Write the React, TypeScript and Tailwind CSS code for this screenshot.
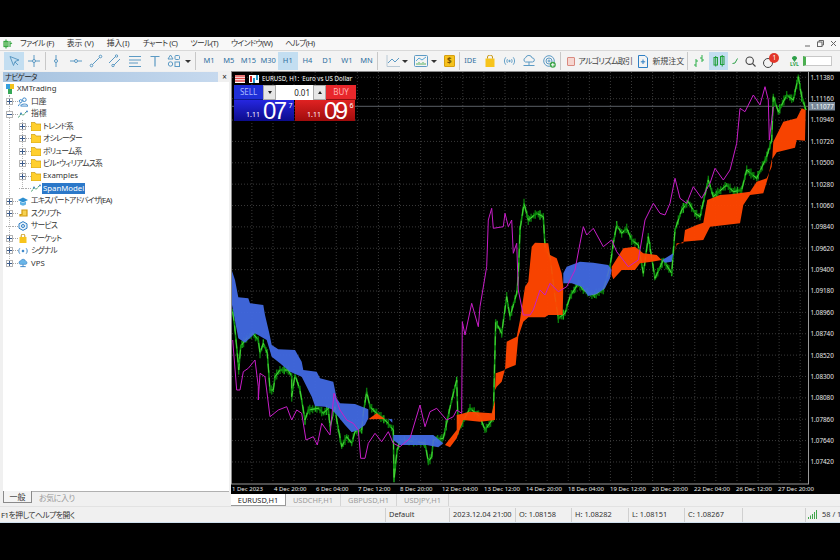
import React from "react";

type P = [number, number];
const zz = (ox: number, oy: number) => (a: number[]): P[] => { const o: P[] = []; for (let i = 0; i < a.length; i += 2) o.push([ox + a[i] / 3, oy + a[i + 1] / 3]); return o; };
const z8 = zz(230, 200);
const z9 = zz(500, 70);
const z10 = zz(485, 230);
const pts = (p: P[]) => p.map((q) => `${q[0].toFixed(1)},${q[1].toFixed(1)}`).join(" ");

const blue = [
  z8([5,210,15,240,25,292,55,295,60,310,100,315,105,345,118,400,125,435,145,448,195,450,215,485,220,510,260,515,270,535,310,545,320,595,330,610,375,612,415,628,415,655,405,675,385,690,365,697,345,675,325,650,305,628,285,620,255,618,245,590,215,530,180,515,150,490,125,470,110,420,75,400,45,428,25,415,5,310]),
  z8([475,656,487,658,487,668]),
  z8([490,705,610,705,640,730,625,742,590,735,510,735,490,720]),
  z9([190,610,200,590,240,575,280,578,325,585,335,600,330,625,315,655,290,672,265,678,245,650,215,640,190,640]),
  z9([487,570,520,550,515,575,495,578]),
];
const orange = [
  z8([415,658,440,640,465,657]),
  z8([645,735,680,690,680,645,720,635,785,640,795,600,795,660,750,665,700,660,680,715,660,742]),
  z10([30,480,32,430,60,420,65,335,95,320,105,270,120,170,130,155,140,50,150,38,190,40,195,75,215,85,230,130,235,170,233,255,190,255,180,262,130,262,115,275,100,320,92,405,60,418,50,455,35,470]),
  z9([335,590,370,535,405,530,430,550,470,555,485,570,455,575,420,580,405,600,365,600,340,628,335,615]),
  z9([522,550,530,520,550,520,555,480,590,465,610,458,622,390,660,375,700,372,750,365,770,335,800,325,815,290,820,215,850,155,890,145,905,115,917,120,915,212,890,210,885,233,830,247,815,270,805,320,790,370,750,375,730,405,720,460,630,470,610,510,550,515,530,525]),
];
const green: P[] = [
  ...z8([8,335,14,380,22,460,26,510,32,440,45,420,68,400,85,420,90,460,100,430,112,460,120,570,130,570,135,530,150,510,175,510,185,530,185,590,195,525,210,570,225,660,235,630,265,625,280,640,295,625,300,680,315,620,320,660,335,740,350,710,365,730,375,695,395,690,400,640,410,575,420,620,440,640,470,665,490,690,492,840,500,760,510,720,560,725,585,730,595,785,605,770,610,720,640,715,665,600,680,540,685,690,720,625,750,650,765,690,790,655,797,365,815,400,830,290,840,350,860,280,865,230]),
  ...z9([60,480,72,400,85,450,110,430,130,440,135,530,150,560,165,680,175,745,195,730,210,680,235,640,250,660,280,675,310,660,330,590,340,520,350,465,365,490,380,475,395,510,415,525,430,610,445,500,465,625,490,570,515,610,525,480,545,420,565,395,585,430,600,440,625,330,640,380,680,345,700,365,725,360,740,300,770,325,800,260,815,210,820,80,835,125,860,75,880,90,895,20,905,80,918,120]),
];
const magenta: P[] = [
  ...z8([8,420,20,570,30,570,40,515,55,505,75,480,85,560,85,600,90,520,105,530,120,650,145,630,170,620,185,660,200,630,215,640,228,720,250,710,262,735,275,670,300,705,312,580,330,630,350,660,370,670,385,690,392,775,405,775,415,730,435,700,455,725,475,695,490,730,510,740,540,715,570,615,585,680,600,635,620,625,650,660,670,650,680,630,695,640,697,365,705,405,725,310,745,380,750,320,770,200,775,60,785,25,790,85,820,80,825,40,835,80,845,60,850,160,860,130,865,270,880,345,900,345]),
  ...z9([100,720,120,660,135,675,150,640,175,665,200,650,225,600,240,520,250,470,260,495,280,475,310,530,335,510,350,545,385,590,415,570,425,510,435,450,460,400,480,430,495,435,510,400,525,325,540,385,560,400,580,350,605,385,630,340,645,295,670,330,690,300,710,220,720,115,735,125,760,75,780,105,795,50,805,90,808,210,820,110]),
];

function candles(line: P[]) {
  const out: { x: number; a: number; b: number; hi: boolean }[] = [];
  let k = 0;
  for (let i = 0; i < line.length - 1; i++) {
    const [x0, y0] = line[i];
    const [x1, y1] = line[i + 1];
    const n = Math.max(1, Math.round(Math.abs(x1 - x0) / 1.5));
    for (let j = 0; j < n; j++) {
      const t = j / n;
      const y = y0 + (y1 - y0) * t;
      k++;
      const r = 1.5 + ((k * 37) % 11) * 0.35;
      out.push({ x: x0 + (x1 - x0) * t, a: y - r, b: y + r, hi: (k * 13) % 7 === 0 });
    }
  }
  return out;
}
const sticks = candles(green);

const prices = ["1.11380","1.11160","1.10940","1.10720","1.10500","1.10280","1.10060","1.09840","1.09620","1.09400","1.09180","1.08960","1.08740","1.08520","1.08300","1.08080","1.07860","1.07640","1.07420"];
const priceYs = prices.map((_, i) => 77.3 + i * 21.37);
const gridXs = Array.from({ length: 28 }, (_, i) => 230.8 + i * 21.09);
const dates = ["1 Dec 2023","4 Dec 20:00","6 Dec 04:00","7 Dec 12:00","8 Dec 20:00","12 Dec 04:00","13 Dec 12:00","14 Dec 20:00","18 Dec 04:00","19 Dec 12:00","20 Dec 20:00","22 Dec 04:00","26 Dec 12:00","27 Dec 20:00"];

const Ic = ({ c, w = 14, h = 14, vb = "0 0 14 14" }: { c: React.ReactNode; w?: number; h?: number; vb?: string }) => (
  <svg width={w} height={h} viewBox={vb} fill="none" stroke="#5c9ac4" strokeWidth="1">{c}</svg>
);

const TB = ({ children, w = "w-[19.7px]", on = false }: { children: React.ReactNode; w?: string; on?: boolean }) => (
  <div className={`${w} h-[18px] flex items-center justify-center shrink-0 ${on ? "bg-[#c3def1]" : ""}`}>{children}</div>
);
const Sep = () => <div className="w-px h-[18px] bg-[#c8c8c8] shrink-0" />;
const Caret = () => <div className="w-0 h-0 border-x-[3px] border-x-transparent border-t-[3px] border-t-[#333] shrink-0" />;
const TF = ({ t, on = false }: { t: string; on?: boolean }) => (
  <TB on={on}><span className="text-[7.5px] text-[#2f6f9f]">{t}</span></TB>
);

const Plus = ({ minus = false }: { minus?: boolean }) => (
  <div className="relative z-10 w-[7px] h-[7px] border border-[#b5b5b5] bg-white flex items-center justify-center shrink-0">
    <svg width="5" height="5" viewBox="0 0 5 5" stroke="#3a5a8a" strokeWidth="1">
      <path d="M0 2.5H5" />
      {!minus && <path d="M2.5 0V5" />}
    </svg>
  </div>
);
const Folder = () => (
  <svg width="10" height="9" viewBox="0 0 10 9"><path d="M0 0.5H4L5 2H10V9H0Z" fill="#ffcf2e" stroke="#c99a10" strokeWidth="0.7" /></svg>
);
const Spark = () => (
  <svg width="10" height="9" viewBox="0 0 10 9" fill="none"><path d="M0.5 7.5L3 3.5L5 5.5L9 1" stroke="#3e9a6a" strokeWidth="1" strokeDasharray="2 0.6" /><circle cx="3" cy="3.5" r="0.9" fill="#3a7fc0" /><circle cx="9" cy="1.4" r="0.9" fill="#3a7fc0" /></svg>
);

type RowT = { level: 0 | 1 | 2; exp?: "+" | "-"; icon: React.ReactNode; text: string; sel?: boolean; jp?: boolean };
const rows: RowT[] = [
  { level: 0, icon: <svg width="10" height="10" viewBox="0 0 10 10"><path d="M1 0H5V5H1Z" fill="#37a0dd" /><path d="M5 0H9V5H5Z" fill="#f2c21b" /><path d="M3 5H7V10H3Z" fill="#36a857" /></svg>, text: "XMTrading" },
  { level: 1, exp: "+", icon: <svg width="11" height="10" viewBox="0 0 11 10" fill="none" stroke="#2f7fc4"><circle cx="7" cy="2.5" r="2" /><path d="M3 9.5C3 6.5 11 6.5 11 9.5Z" /><circle cx="3" cy="4" r="1.6" /><path d="M0.5 9.5C0.5 7 3 7 3 7" /></svg>, text: "口座" },
  { level: 1, exp: "-", icon: <Spark />, text: "指標" },
  { level: 2, exp: "+", icon: <Folder />, text: "トレンド系", jp: true },
  { level: 2, exp: "+", icon: <Folder />, text: "オシレーター", jp: true },
  { level: 2, exp: "+", icon: <Folder />, text: "ボリューム系", jp: true },
  { level: 2, exp: "+", icon: <Folder />, text: "ビル・ウィリアムス系", jp: true },
  { level: 2, exp: "+", icon: <Folder />, text: "Examples" },
  { level: 2, icon: <Spark />, text: "SpanModel", sel: true },
  { level: 1, exp: "+", icon: <svg width="10" height="9" viewBox="0 0 10 9"><path d="M0 3L5 0.5L10 3L5 5.5Z" fill="#2e8fd0" /><path d="M2 4.5V7.5C4 9 6 9 8 7.5V4.5L5 6Z" fill="#5fb2e5" /></svg>, text: "エキスパートアドバイザ(EA)", jp: true },
  { level: 1, exp: "+", icon: <svg width="9" height="9" viewBox="0 0 9 9" fill="none" stroke="#d19a10" strokeWidth="1.2"><path d="M3 1H8V7H1V5.5H3Z" fill="#f6d252" /></svg>, text: "スクリプト", jp: true },
  { level: 1, icon: <svg width="10" height="10" viewBox="0 0 10 10" fill="#e7f1fa" stroke="#2f7fc4"><path d="M5 0.6L9 2.8V7.2L5 9.4L1 7.2V2.8Z" /><circle cx="5" cy="5" r="1.5" /></svg>, text: "サービス", jp: true },
  { level: 1, exp: "+", icon: <svg width="8" height="9" viewBox="0 0 8 9"><path d="M0.5 3H7.5V9H0.5Z" fill="#f7c41c" /><path d="M2.2 3V1.8A1.8 1.8 0 0 1 5.8 1.8V3" fill="none" stroke="#c69410" /></svg>, text: "マーケット", jp: true },
  { level: 1, exp: "+", icon: <svg width="11" height="8" viewBox="0 0 11 8" fill="none" stroke="#2f7fc4"><path d="M2 1C0.5 3 0.5 5 2 7M9 1C10.5 3 10.5 5 9 7" /><circle cx="5.5" cy="4" r="1" fill="#2f7fc4" /></svg>, text: "シグナル", jp: true },
  { level: 1, exp: "+", icon: <svg width="11" height="10" viewBox="0 0 11 10"><path d="M2.5 6.5A2 2 0 0 1 3 2.6A2.8 2.8 0 0 1 8.3 3A1.8 1.8 0 0 1 8.6 6.5Z" fill="#69b5e8" stroke="#2f7fc4" strokeWidth="0.7" /><path d="M5.5 6.5V9M2.5 9H8.5" stroke="#2f7fc4" /></svg>, text: "VPS" },
];

const Row = ({ r }: { r: RowT }) => {
  const expX = r.level === 2 ? "pl-[16px]" : "pl-[3px]";
  return (
    <div className="h-[12.45px] flex items-center relative">
      {r.level === 0 ? (
        <div className="pl-[2px] flex items-center gap-[2px]">
          {r.icon}
          <span className="text-[#333]">{r.text}</span>
        </div>
      ) : (
        <div className={`${expX} flex items-center`}>
          {r.exp ? <Plus minus={r.exp === "-"} /> : <div className="w-[7px] h-0 border-t border-dotted border-[#aaa]" />}
          <div className="w-[5px] border-t border-dotted border-[#aaa]" />
          <div className={`w-[10px] flex justify-center ${r.level === 2 ? "mr-[2px]" : "mr-[3px]"}`}>{r.icon}</div>
          <span className={`whitespace-nowrap ${r.sel ? "bg-[#2b78c9] text-white px-[1px] -ml-[1px] leading-[11px]" : "text-[#333]"} ${r.jp ? "tracking-[-0.75px]" : ""}`}>{r.text}</span>
        </div>
      )}
    </div>
  );
};

const Navigator = () => (
  <div className="w-[228px] ml-[3px] shrink-0 flex flex-col h-full">
    <div className="h-[10px] mt-[1px] flex items-center shrink-0">
      <div className="w-[215px] h-[10px] bg-gradient-to-r from-[#a5c2df] to-[#c6d9ee] text-[7.5px] tracking-[-0.7px] text-[#222] pl-[2px] leading-[10px]">ナビゲータ</div>
      <div className="flex-1 text-center text-[8px] text-[#222] leading-[10px]">×</div>
    </div>
    <div className="flex-1 bg-white mr-[2px] relative text-[7.8px]">
      <div className="absolute left-[6px] top-[13px] h-[168px] border-l border-dotted border-[#b5b5b5]" />
      <div className="absolute left-[19px] top-[38px] h-[69px] border-l border-dotted border-[#b5b5b5]" />
      <div className="relative pt-[1px]">
        {rows.map((r) => <Row key={r.text} r={r} />)}
      </div>
    </div>
    <div className="h-[15px] flex items-start text-[8px] shrink-0 mr-[2px] border-t border-[#b0b0b0]">
      <div className="w-[29px] h-[12px] -mt-px bg-[#f4f4f4] border-x border-b border-[#8a8a8a] border-t-0 text-center text-[#333] leading-[12px]">一般</div>
      <div className="pl-[7px] text-[#9a9a9a] leading-[12px] tracking-[-0.5px]">お気に入り</div>
    </div>
  </div>
);

const Chart = () => (
  <svg width="609" height="422" viewBox="231 72 609 422" className="block" fontFamily="'Noto Sans', sans-serif">
    <rect x="231" y="72" width="609" height="422" fill="#000" />
    <g stroke="#3a3a3a" strokeWidth="1" strokeDasharray="1 2">
      {gridXs.map((x) => <line key={x} x1={x} x2={x} y1="72" y2="483" />)}
      {priceYs.map((y) => <line key={y} x1="232" x2="807" y1={y} y2={y} />)}
    </g>
    <line x1="232" x2="808" y1="106.3" y2="106.3" stroke="#5a5f66" />
    {sticks.map((s, i) => <line key={i} x1={s.x} x2={s.x} y1={s.a} y2={s.b} stroke={s.hi ? "#1cb01c" : "#0a780a"} strokeWidth="1.4" />)}
    <polyline points={pts(green)} fill="none" stroke="#0f8f0f" strokeWidth="1.6" />
    <polyline points={pts(green)} fill="none" stroke="#36dc36" strokeWidth="1" strokeDasharray="9 5" />
    {blue.map((p, i) => <polygon key={i} points={pts(p)} fill="#4169e1" opacity="0.95" />)}
    {orange.map((p, i) => <polygon key={i} points={pts(p)} fill="#ff4500" opacity="0.97" />)}
    <polyline points={pts(green)} fill="none" stroke="#b0a040" strokeWidth="0.7" opacity="0.2" strokeDasharray="9 5" />
    <polyline points={pts(magenta)} fill="none" stroke="#c81ec8" strokeWidth="1" />
    <rect x="231" y="72" width="1" height="412" fill="#8a8a8a" />
    <rect x="808" y="72" width="1" height="412" fill="#9a9a9a" />
    <rect x="231" y="483.5" width="578" height="1" fill="#9a9a9a" />
    {prices.map((t, i) => (
      <text key={t} x="810.5" y={priceYs[i] + 2.4} fontSize="6.3" fill="#e8e8e8">{t}</text>
    ))}
    <rect x="809" y="102" width="26" height="8.5" fill="#778899" />
    <text x="810.5" y="108.7" fontSize="6.3" fill="#fff">1.11077</text>
    {dates.map((d, i) => (
      <text key={d} x={232 + i * 42} y="490.5" fontSize="6" fill="#e8e8e8">{d}</text>
    ))}
  </svg>
);

const Trade = () => (
  <div className="absolute left-[3px] top-[1px] w-[122px] text-white">
    <div className="h-[12px] flex items-center text-[6.2px] pl-[1px] whitespace-nowrap">
      <svg width="10" height="8" viewBox="0 0 10 8" className="mr-[4px] shrink-0"><rect width="10" height="8" fill="#fff" /><path d="M0 1H10M0 3.5H10M0 6H10" stroke="#e04a4a" strokeWidth="1.5" /></svg>
      <svg width="10" height="8" viewBox="0 0 10 8" className="mr-[3px] shrink-0"><rect width="10" height="8" fill="#fff" /><rect x="1" y="1" width="2" height="6" fill="#c22" /><rect x="4" y="3" width="2" height="5" fill="#29c" /><rect x="7" y="0" width="2" height="5" fill="#29c" /></svg>
      <span>EURUSD, H1:&nbsp; Euro vs US Dollar</span>
    </div>
    <div className="h-[15px] flex text-[8px]">
      <div className="w-[29px] bg-[#1f2fd8] text-[#a8b8ff] flex items-center justify-center border-b border-[#0f1a90]">SELL</div>
      <div className="flex-1 bg-white flex items-center text-[#222]">
        <div className="w-[13px] h-full bg-[#e6e6e6] border border-[#aaa] flex items-center justify-center"><div className="w-0 h-0 border-x-[2px] border-x-transparent border-t-[3px] border-t-[#222]" /></div>
        <div className="flex-1 text-right pr-[3px]">0.01</div>
        <div className="w-[13px] h-full bg-[#e6e6e6] border border-[#aaa] flex items-center justify-center"><div className="w-0 h-0 border-x-[2px] border-x-transparent border-b-[3px] border-b-[#222]" /></div>
      </div>
      <div className="w-[30px] bg-[#e8272b] text-[#ffb3b3] flex items-center justify-center border-b border-[#901010]">BUY</div>
    </div>
    <div className="h-[21px] flex gap-px">
      <div className="w-[60px] bg-gradient-to-b from-[#2626e0] to-[#0c0c8c] flex items-end">
        <span className="text-[7px] leading-[9px] ml-[12px] mb-[2px]">1.11</span>
        <span className="text-[24px] leading-[21px] ml-[3px] tracking-[-2.5px] font-['Liberation_Sans',sans-serif]">07</span>
        <span className="text-[7px] leading-[8px] ml-[4px] self-start mt-[2px]">7</span>
      </div>
      <div className="w-[60px] bg-gradient-to-b from-[#e02222] to-[#a00c0c] flex items-end">
        <span className="text-[7px] leading-[9px] ml-[12px] mb-[2px]">1.11</span>
        <span className="text-[24px] leading-[21px] ml-[3px] tracking-[-2.5px] font-['Liberation_Sans',sans-serif]">09</span>
        <span className="text-[7px] leading-[8px] ml-[4px] self-start mt-[2px]">6</span>
      </div>
    </div>
  </div>
);

const Toolbar = () => (
  <div className="h-[21px] bg-[#f3f3f3] flex items-center pl-[4px] shrink-0 border-t border-[#d8d8d8]">
    <TB on><Ic c={<><path d="M3 2.5L12 6L8 7.5L6.5 11.5Z" /><path d="M8 8L11 11" /></>} /></TB>
    <TB><Ic c={<><path d="M7 1V13M1 7H13" /><circle cx="7" cy="7" r="1.5" fill="#f3f3f3" /></>} /></TB>
    <div className="w-[2px]" /><Sep />
    <TB><Ic c={<><path d="M7 1V13" /><circle cx="7" cy="7" r="1.5" fill="#f3f3f3" /></>} /></TB>
    <TB><Ic c={<><path d="M1 7H13" /><circle cx="7" cy="7" r="1.5" fill="#f3f3f3" /></>} /></TB>
    <TB><Ic c={<><path d="M2 12L12 2" /><circle cx="2.5" cy="11.5" r="1.3" fill="#f3f3f3" /><circle cx="11.5" cy="2.5" r="1.3" fill="#f3f3f3" /></>} /></TB>
    <TB><Ic c={<><path d="M1 9L8 2M5 12L12 5" /><circle cx="8.5" cy="2" r="1.2" fill="#f3f3f3" /><circle cx="5" cy="11.5" r="1.2" fill="#f3f3f3" /></>} /></TB>
    <TB><Ic c={<path d="M1 2.5H13M1 6H13M1 9H10M1 12.5H13" />} /></TB>
    <TB><Ic c={<path d="M2.5 2.5H11.5M7 2.5V12.5" strokeWidth="1.2" />} /></TB>
    <TB><Ic c={<><path d="M3.5 1L6 5H1Z" /><rect x="8" y="1.5" width="4.5" height="4" rx="1" /><circle cx="3.5" cy="10" r="2.2" /><rect x="8" y="8" width="4.5" height="4.5" /></>} /></TB>
    <div className="w-[1px]" /><Caret />
    <div className="w-[4px]" /><Sep />
    <div className="w-[3px]" />
    <TF t="M1" /><TF t="M5" /><TF t="M15" /><TF t="M30" /><TF t="H1" on /><TF t="H4" /><TF t="D1" /><TF t="W1" /><TF t="MN" />
    <div className="w-[1px]" /><Sep />
    <div className="w-[7px]" />
    <TB w="w-[16px]"><Ic c={<><path d="M1 1V12.5H14" stroke="#b8c8d4" /><path d="M2 9L6 5L9 8L13 4" /></>} /></TB>
    <div className="w-[1px]" /><Caret />
    <div className="w-[6px]" />
    <TB w="w-[14px]"><Ic c={<><rect x="0.5" y="1.5" width="13" height="11" rx="1" /><path d="M2 7L5 4L8 6L12 3" stroke="#58a8d8" /><path d="M3 11V9M5 11V8M7 11V9M9 11V8M11 11V9" stroke="#58b060" /></>} /></TB>
    <div className="w-[3px]" /><Caret />
    <div className="w-[6px]" />
    <TB w="w-[12px]"><div className="w-[11px] h-[12px] bg-[#f6c21c] border border-[#d69f10] rounded-[1px] flex items-center justify-center text-[8px] leading-none font-bold text-[#7a5600]">$</div></TB>
    <div className="w-[4px]" /><Sep />
    <TB w="w-[20px]"><span className="text-[7.5px] text-[#2f6f9f]">IDE</span></TB>
    <TB w="w-[19px]"><svg width="10" height="12" viewBox="0 0 10 12"><path d="M0.5 3.5H9.5V12H0.5Z" fill="#f7c41c" /><path d="M2.5 3.5V2A2.5 2 0 0 1 7.5 2V3.5" fill="none" stroke="#c69410" /></svg></TB>
    <TB w="w-[20px]"><Ic w={13} c={<><path d="M3 3C1 5.5 1 8.5 3 11M11 3C13 5.5 13 8.5 11 11M4.8 5C4 6.2 4 7.8 4.8 9M9.2 5C10 6.2 10 7.8 9.2 9" /><circle cx="7" cy="7" r="0.8" fill="#5c9ac4" /></>} /></TB>
    <TB w="w-[20px]"><Ic c={<><path d="M3.5 8A2.2 2.2 0 0 1 3.5 3.8A3.5 3.5 0 0 1 10.2 4A2 2 0 0 1 10.5 8Z" /><path d="M7 8V11.5M1.5 11.5H12.5" /></>} /></TB>
    <TB w="w-[20px]"><svg width="13" height="13" viewBox="0 0 13 13" fill="none" stroke="#5c9ac4"><circle cx="6" cy="6" r="5.3" /><circle cx="6" cy="6" r="3" /><circle cx="6" cy="6" r="1" /><circle cx="9.8" cy="9.8" r="3" fill="#3fa64a" stroke="none" /><path d="M9.8 8V11.6M8 9.8H11.6" stroke="#fff" /></svg></TB>
    <div className="w-[1px]" /><Sep />
    <div className="w-[6px]" />
    <div className="w-[8px] h-[9px] bg-[#f6d6d0] border border-[#d98a80] rounded-[1px] shrink-0" />
    <span className="text-[8px] text-[#444] ml-[3px] w-[54px] whitespace-nowrap shrink-0 tracking-[-0.7px]">アルゴリズム取引</span>
    <div className="w-[6px]" />
    <svg width="10" height="13" viewBox="0 0 10 13" fill="none" stroke="#2f7fc4" className="shrink-0"><path d="M0.5 0.5H7L9.5 3V12.5H0.5Z" /><path d="M5 4.5V9M2.8 6.8H7.2" /></svg>
    <span className="text-[8px] text-[#444] ml-[4px] w-[33px] whitespace-nowrap shrink-0">新規注文</span>
    <div className="w-[2px]" /><Sep />
    <div className="w-[2px]" />
    <TB w="w-[19px]"><svg width="11" height="12" viewBox="0 0 11 12" fill="none" stroke="#2fb04a"><path d="M2 4V12M0 10H2M2 6H4M8 0V7M6 3H8M8 5H10" /></svg></TB>
    <TB w="w-[19px]" on><svg width="12" height="12" viewBox="0 0 12 12" fill="none" stroke="#22a03c"><rect x="1" y="2.5" width="3.5" height="7.5" /><path d="M2.7 1V11.5" /><rect x="7.5" y="1.5" width="3.5" height="8" /><path d="M9.2 0V11.5" /></svg></TB>
    <TB w="w-[13px]"><svg width="6" height="6" viewBox="0 0 6 6" fill="none" stroke="#2fa04a"><path d="M0.5 5.5L3 5L5.5 0.5" /></svg></TB>
    <TB w="w-[19px]"><svg width="11" height="11" viewBox="0 0 11 11" fill="none" stroke="#444" strokeWidth="1.1"><circle cx="4.7" cy="4.7" r="3.7" /><path d="M7.5 7.5L10.5 10.5" /></svg></TB>
    <TB w="w-[19px]"><div className="relative w-[10px] h-[10px] rounded-full border border-[#444] mt-[3px] -ml-[3px]"><div className="absolute -top-[6px] left-[5px] w-[10px] h-[10px] rounded-full bg-[#e2372a] text-white text-[6.5px] leading-[10px] text-center">1</div></div></TB>
    <div className="w-[9px]" />
    <div className="w-[12px] shrink-0 flex flex-col items-center text-[#2fa04a] leading-none">
      <svg width="7" height="7" viewBox="0 0 7 7" fill="#2fa04a"><path d="M1 3.5A2.5 2.5 0 0 1 6 3.5L3.5 7Z" /></svg>
      <span className="text-[5px] font-bold">LVL</span>
    </div>
    <div className="w-[3px]" />
    <div className="w-[29px] h-[10px] bg-white border border-[#c8c8c8] border-l-[3px] border-l-[#4caf50] shrink-0" />
  </div>
);

const Tab = ({ t, on = false, w }: { t: string; on?: boolean; w: string }) => (
  <div className={`${w} h-[12px] text-center text-[7.4px] leading-[12px] shrink-0 ${on ? "bg-white text-[#222] border-r border-b border-[#999]" : "text-[#9a9a9a] border-r border-[#d5d5d5]"}`}>{t}</div>
);

const S = ({ t, w }: { t: string; w: string }) => (
  <div className={`${w} h-[14px] flex items-center pl-[3px] border-r border-[#d0d0d0] text-[7.4px] text-[#333] shrink-0 whitespace-nowrap`}>{t}</div>
);

export default function App() {
  return (
    <div className="w-[840px] h-[560px] bg-black flex flex-col overflow-hidden [font-feature-settings:'palt'] font-['Noto_Sans','Noto_Sans_CJK_JP',sans-serif]">
      <div className="h-[37px] shrink-0" />
      <div className="h-[13px] bg-[#f8f8f8] flex items-center shrink-0 text-[7.8px] text-[#333]">
        <div className="w-[20px] pl-[3px] flex items-center shrink-0">
          <svg width="10" height="10" viewBox="0 0 10 10" fill="none" stroke="#3aa845" strokeWidth="1.2"><rect x="1" y="2.5" width="4" height="5" fill="#bfe6b0" /><path d="M3 0.5V9.5M7 2V8M9 4L7 5" /></svg>
        </div>
        <div className="flex items-center gap-[13px] whitespace-nowrap">
          <span className="tracking-[-0.5px]">ファイル (F)</span><span>表示 (V)</span><span>挿入(I)</span><span className="tracking-[-0.5px]">チャート (C)</span><span className="tracking-[-0.6px]">ツール(T)</span><span className="tracking-[-0.6px]">ウインドウ(W)</span><span className="tracking-[-0.6px]">ヘルプ(H)</span>
        </div>
        <div className="ml-auto pr-[3px] flex items-center gap-[6px] text-[#555]">
          <svg width="7" height="7" viewBox="0 0 7 7" stroke="#666"><path d="M1 6H6" /></svg>
          <svg width="7" height="7" viewBox="0 0 7 7" stroke="#666" fill="none"><rect x="0.5" y="2" width="4.5" height="4.5" /><path d="M2 2V0.5H6.5V5H5" /></svg>
          <svg width="7" height="7" viewBox="0 0 7 7" stroke="#666"><path d="M1 1L6 6M6 1L1 6" /></svg>
        </div>
      </div>
      <Toolbar />
      <div className="h-[435px] shrink-0 flex bg-[#f0f0f0]">
        <Navigator />
        <div className="flex-1 min-w-0 flex flex-col">
          <div className="relative h-[423px] shrink-0 overflow-hidden border-t border-[#8a8a8a]">
            <Chart />
            <Trade />
          </div>
          <div className="h-[12px] bg-[#f0f0f0] flex shrink-0">
            <Tab t="EURUSD,H1" w="w-[55px]" on />
            <Tab t="USDCHF,H1" w="w-[55px]" />
            <Tab t="GBPUSD,H1" w="w-[56px]" />
            <Tab t="USDJPY,H1" w="w-[52px]" />
          </div>
        </div>
      </div>
      <div className="h-[16px] bg-[#f0f0f0] flex items-center shrink-0 border-t border-[#e2e2e2]">
        <div className="w-[386px] text-[7.8px] tracking-[-0.5px] text-[#333] pl-px shrink-0 border-r border-[#d0d0d0] h-[14px] leading-[14px]">F1を押してヘルプを開く</div>
        <S t="Default" w="w-[64px]" />
        <S t="2023.12.04 21:00" w="w-[66px]" />
        <S t="O: 1.08158" w="w-[56px]" />
        <S t="H: 1.08282" w="w-[57px]" />
        <S t="L: 1.08151" w="w-[56px]" />
        <S t="C: 1.08267" w="w-[58px]" />
        <S t="" w="w-[63px]" />
        <div className="flex items-center pl-[2px] text-[7.4px] text-[#333] whitespace-nowrap">
          <svg width="10" height="9" viewBox="0 0 10 9" fill="#3fa64a"><rect x="0" y="7" width="1" height="2" /><rect x="2" y="5.5" width="1" height="3.5" /><rect x="4" y="4" width="1" height="5" /><rect x="6" y="2" width="1" height="7" /><rect x="8" y="0" width="1" height="9" /></svg>
          <span className="ml-[4px]">58 / 1</span>
        </div>
      </div>
      <div className="h-px bg-[#cfe0ee] shrink-0" />
      <div className="flex-1" />
    </div>
  );
}
